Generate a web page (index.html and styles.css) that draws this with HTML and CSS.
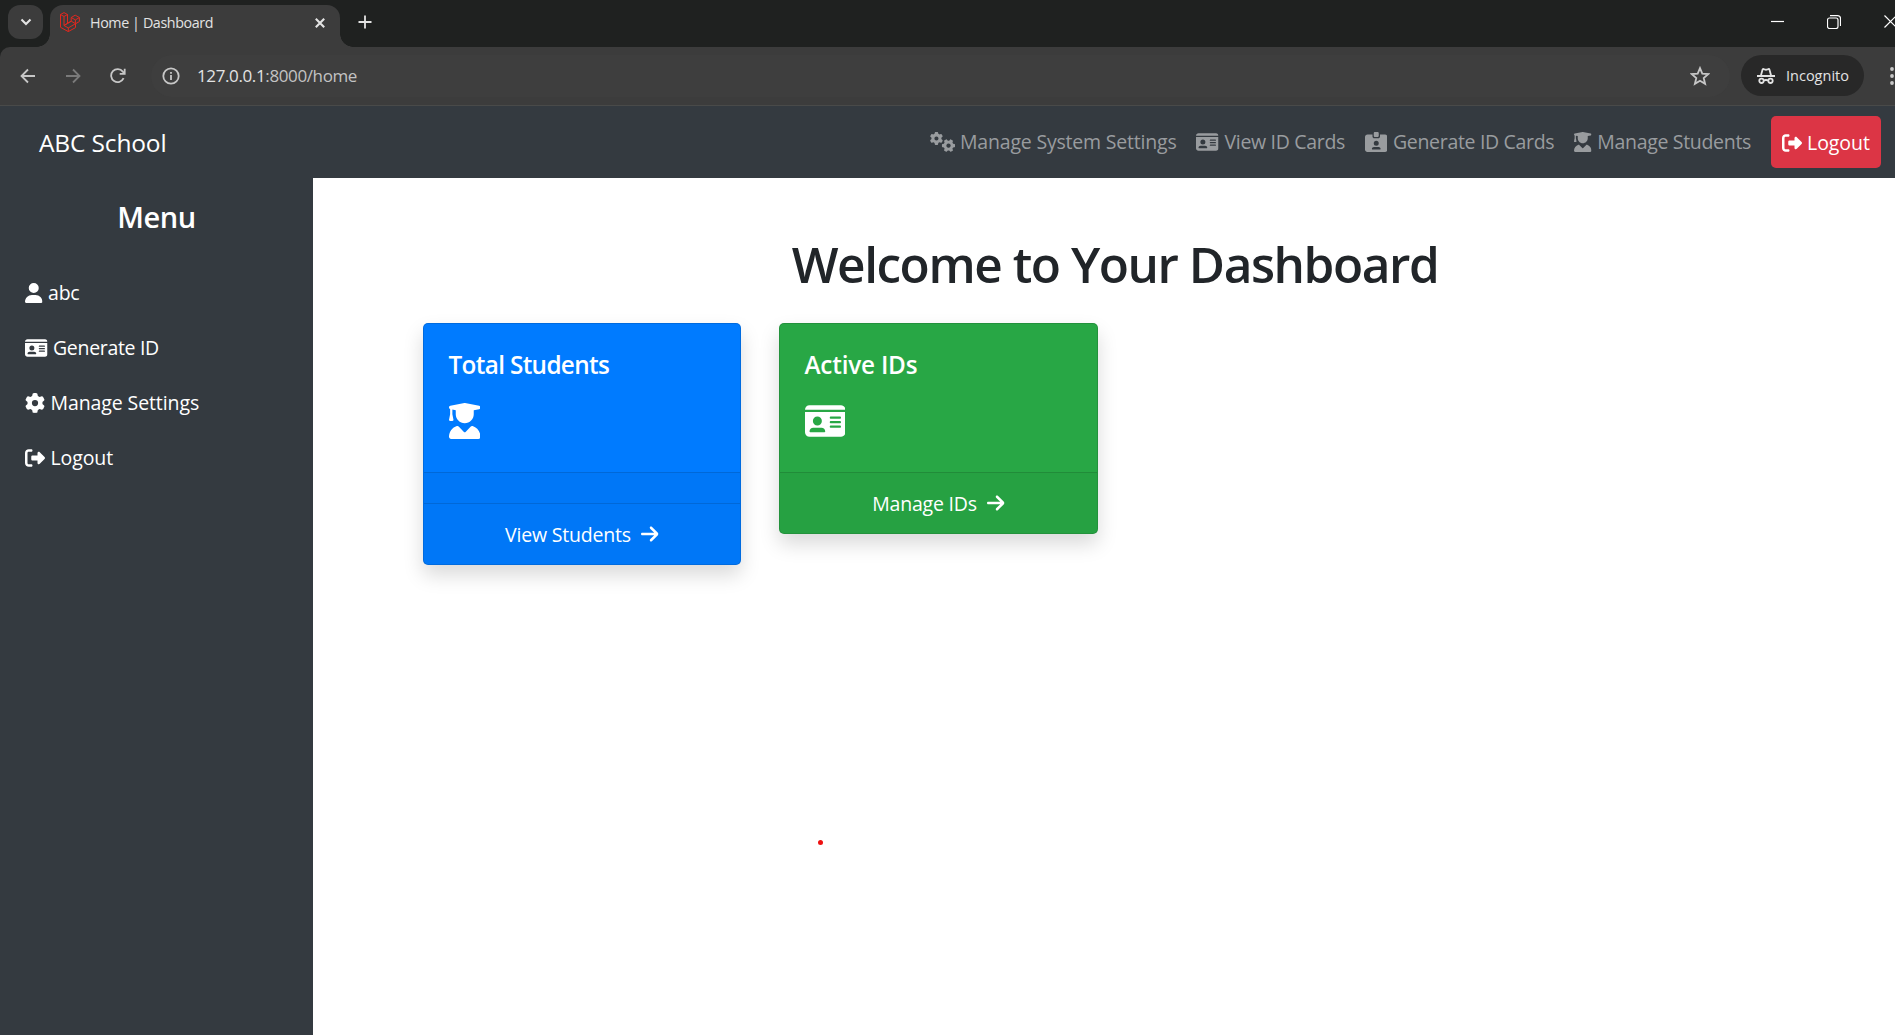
FILE: index.html
```html
<!DOCTYPE html>
<html lang="en">
<head>
<meta charset="utf-8">
<title>Home | Dashboard</title>
<link rel="stylesheet" href="styles.css">
</head>
<body>
<svg class="defs" aria-hidden="true">
  <symbol id="user" viewBox="0 0 448 512"><path d="M224 256A128 128 0 1 0 224 0a128 128 0 1 0 0 256zm-45.700 48C79.800 304 0 383.800 0 482.300C0 498.700 13.300 512 29.700 512l388.600 0c16.400 0 29.700-13.300 29.700-29.700C448 383.800 368.200 304 269.700 304l-91.400 0z"/></symbol>
  <symbol id="id-card" viewBox="0 0 576 512"><path d="M0 96l576 0c0-35.300-28.700-64-64-64L64 32C28.700 32 0 60.700 0 96zm0 32L0 416c0 35.300 28.700 64 64 64l448 0c35.300 0 64-28.700 64-64l0-288L0 128zM64 405.300c0-29.500 23.900-53.300 53.300-53.300l117.300 0c29.500 0 53.300 23.900 53.300 53.300c0 5.900-4.800 10.700-10.700 10.700L74.700 416c-5.900 0-10.700-4.800-10.700-10.700zM176 192a64 64 0 1 1 0 128 64 64 0 1 1 0-128zm176 16c0-8.800 7.200-16 16-16l128 0c8.800 0 16 7.200 16 16s-7.200 16-16 16l-128 0c-8.800 0-16-7.200-16-16zm0 64c0-8.800 7.200-16 16-16l128 0c8.800 0 16 7.200 16 16s-7.200 16-16 16l-128 0c-8.800 0-16-7.200-16-16zm0 64c0-8.800 7.200-16 16-16l128 0c8.800 0 16 7.200 16 16s-7.200 16-16 16l-128 0c-8.800 0-16-7.200-16-16z"/></symbol>
  <symbol id="gear" viewBox="0 0 512 512"><path id="gear-path" d="M495.900 166.600c3.200 8.700 .5 18.400-6.400 24.600l-43.300 39.400c1.100 8.300 1.700 16.800 1.700 25.400s-.6 17.100-1.700 25.400l43.300 39.400c6.900 6.200 9.600 15.900 6.400 24.600c-4.400 11.900-9.700 23.300-15.800 34.300l-4.700 8.100c-6.600 11-14 21.400-22.100 31.200c-5.900 7.200-15.700 9.600-24.500 6.800l-55.700-17.700c-13.400 10.300-28.200 18.900-44 25.400l-12.500 57.100c-2 9.100-9 16.300-18.200 17.800c-13.800 2.300-28 3.500-42.500 3.500s-28.700-1.200-42.500-3.500c-9.200-1.500-16.200-8.700-18.200-17.800l-12.500-57.100c-15.800-6.500-30.600-15.100-44-25.400L83.100 425.900c-8.800 2.800-18.600 .3-24.500-6.800c-8.100-9.800-15.500-20.200-22.100-31.200l-4.700-8.100c-6.100-11-11.400-22.400-15.800-34.300c-3.200-8.700-.5-18.400 6.400-24.600l43.300-39.400C64.600 273.100 64 264.600 64 256s.6-17.100 1.700-25.400L22.400 191.200c-6.900-6.200-9.600-15.900-6.400-24.600c4.400-11.900 9.700-23.300 15.800-34.300l4.700-8.100c6.600-11 14-21.400 22.100-31.200c5.900-7.200 15.700-9.600 24.500-6.800l55.700 17.700c13.400-10.300 28.200-18.900 44-25.400l12.500-57.100c2-9.100 9-16.300 18.200-17.800C227.300 1.200 241.500 0 256 0s28.700 1.200 42.500 3.500c9.200 1.500 16.200 8.700 18.200 17.800l12.500 57.100c15.800 6.500 30.600 15.100 44 25.400l55.700-17.700c8.800-2.800 18.600-.3 24.500 6.800c8.100 9.800 15.500 20.200 22.100 31.200l4.700 8.100c6.100 11 11.400 22.400 15.800 34.300zM256 336a80 80 0 1 0 0-160 80 80 0 1 0 0 160z"/></symbol>
  <symbol id="gears" viewBox="0 0 640 512"><use href="#gear-path" transform="translate(-4 -4) scale(.66)"/><use href="#gear-path" transform="translate(474 348) rotate(30) scale(.66) translate(-256 -256)"/></symbol>
  <symbol id="sign-out" viewBox="0 0 512 512"><path d="M377.900 105.900L500.700 228.700c7.200 7.200 11.300 17.100 11.300 27.300s-4.100 20.100-11.300 27.300L377.900 406.100c-6.400 6.400-15 9.900-24 9.900c-18.700 0-33.900-15.200-33.900-33.900l0-62.100-128 0c-17.700 0-32-14.300-32-32l0-64c0-17.700 14.300-32 32-32l128 0 0-62.100c0-18.700 15.200-33.900 33.900-33.900c9 0 17.600 3.600 24 9.900zM160 96L96 96c-17.700 0-32 14.300-32 32l0 256c0 17.700 14.300 32 32 32l64 0c17.700 0 32 14.300 32 32s-14.300 32-32 32l-64 0c-53 0-96-43-96-96L0 128C0 75 43 32 96 32l64 0c17.700 0 32 14.300 32 32s-14.300 32-32 32z"/></symbol>
  <symbol id="graduate" viewBox="0 0 448 512"><path d="M219.300 .5c3.100-.6 6.300-.6 9.400 0l200 40C439.900 42.700 448 52.600 448 64s-8.100 21.300-19.300 23.500L352 102.900l0 57.100c0 70.700-57.300 128-128 128s-128-57.300-128-128l0-57.100L48 93.300l0 65.100 15.700 78.400c.9 4.700-.3 9.600-3.300 13.300s-7.600 5.900-12.400 5.900l-32 0c-4.800 0-9.300-2.100-12.400-5.900s-4.300-8.600-3.300-13.300L16 158.400l0-71.800C6.500 83.300 0 74.300 0 64C0 52.600 8.100 42.700 19.300 40.500l200-40zM111.900 327.700c10.500-3.400 21.800 .4 29.400 8.500l71 75.500c6.300 6.700 17 6.700 23.300 0l71-75.500c7.600-8.100 18.900-11.900 29.400-8.500C401 348.600 448 409.400 448 481.300c0 17-13.800 30.700-30.700 30.700L30.700 512C13.800 512 0 498.200 0 481.300c0-71.900 47-132.700 111.900-153.600z"/></symbol>
  <symbol id="id-clip" viewBox="0 0 576 512"><path d="M256 0l64 0c17.700 0 32 14.300 32 32l0 64c0 17.700-14.300 32-32 32l-64 0c-17.700 0-32-14.300-32-32l0-64c0-17.700 14.300-32 32-32zM64 64l128 0 0 48c0 26.500 21.500 48 48 48l96 0c26.500 0 48-21.500 48-48l0-48 128 0c35.300 0 64 28.700 64 64l0 320c0 35.300-28.700 64-64 64L64 512c-35.300 0-64-28.700-64-64L0 128C0 92.700 28.700 64 64 64zM176 437.300c0 5.900 4.800 10.700 10.700 10.700l202.700 0c5.900 0 10.700-4.800 10.700-10.700c0-29.500-23.900-53.300-53.300-53.300l-117.300 0c-29.500 0-53.300 23.900-53.300 53.300zM288 352a64 64 0 1 0 0-128 64 64 0 1 0 0 128z"/></symbol>
  <symbol id="arrow" viewBox="0 0 448 512"><path d="M438.600 278.600c12.500-12.500 12.500-32.800 0-45.300l-160-160c-12.500-12.500-32.800-12.500-45.300 0s-12.500 32.800 0 45.300L338.800 224 32 224c-17.700 0-32 14.300-32 32s14.300 32 32 32l306.700 0L233.400 393.400c-12.500 12.500-12.500 32.800 0 45.300s32.800 12.500 45.300 0l160-160z"/></symbol>
</svg>

<header class="browser">
  <div class="tabstrip">
    <div class="tab-search"><svg width="12" height="8" viewBox="0 0 12 8"><path d="M1.500 1.500 6 6l4.500-4.500" class="line bold"/></svg></div>
    <div class="tab">
      <svg class="favicon" width="20" height="20" viewBox="0 0 20 20"><path d="M.5 2.500 4 .6l3.500 1.900v8.900l3.700-2.200V5.500l4-2.300 4.200 2.300v4l-3.900 2.300v3.800l-7.200 4-7.800-4.300zM.5 2.500 4 4.500l3.500-2M4 4.500v9l4.300 2.400v3.700M4 13.500l3.500-2.100M8.300 15.900l7.200-4.200M4 13.500l7.200-4.300 4.300 2.500M11.200 5.500l4.200 2.400 4-2.400M15.400 7.900v3.800"/></svg>
      <span class="tab-title">Home | Dashboard</span>
      <svg class="tab-close" width="10" height="10" viewBox="0 0 10 10"><path d="M.8.8l8.400 8.400M9.200.8.800 9.200" class="line bold"/></svg>
    </div>
    <svg class="new-tab" width="14" height="14" viewBox="0 0 14 14"><path d="M7 .5v13M.5 7h13" class="line"/></svg>
    <div class="window-buttons">
      <svg width="13" height="13" viewBox="0 0 13 13"><path d="M0 6.500h13" class="thin"/></svg>
      <svg width="14" height="14" viewBox="0 0 14 14"><rect x=".5" y="3" width="10.500" height="10.500" rx="2" class="thin"/><path d="M3 .6h7.500a3 3 0 0 1 3 3V11" class="thin"/></svg>
      <svg width="13" height="13" viewBox="0 0 13 13"><path d="M.5.5l12 12M12.500.5l-12 12" class="thin"/></svg>
    </div>
  </div>
  <div class="toolbar">
    <svg width="16" height="16" viewBox="0 0 16 16"><path d="M15 8H2M8 1.500 1.500 8 8 14.500" class="line"/></svg>
    <svg class="disabled" width="16" height="16" viewBox="0 0 16 16"><path d="M1 8h13M8 1.500 14.500 8 8 14.500" class="line"/></svg>
    <svg width="16" height="16" viewBox="0 0 16 16"><path d="M13.600 10.200A6.500 6.500 0 1 1 12.800 3.600L14.500 5.400M14.700.8v5H9.700" class="line"/></svg>
    <div class="omnibox">
      <svg width="18" height="18" viewBox="0 0 18 18"><circle cx="9" cy="9" r="7.700" class="line"/><path d="M9 8v5M9 4.900v1.900" class="line"/></svg>
      <span class="url">127.0.0.1<span>:8000/home</span></span>
      <svg class="star" width="20" height="20" viewBox="0 0 20 20"><path d="M10 2.100l2.300 5.500 5.900.5-4.500 3.900 1.400 5.800L10 14.700l-5.100 3.100L6.300 12 1.800 8.100l5.900-.5z" class="line"/></svg>
    </div>
    <div class="incognito">
      <svg width="18" height="18" viewBox="0 0 18 18"><path d="M0 9h18M3.800 9l1.700-6.300q.3-.9 1.200-.6L9 2.800l2.300-.7q.9-.3 1.200.6L14.200 9" class="line"/><circle cx="4.500" cy="13.800" r="2.200" class="line"/><circle cx="13.500" cy="13.800" r="2.200" class="line"/><path d="M6.700 13.500q2.300-1 4.600 0" class="line"/></svg>
      <span>Incognito</span>
    </div>
    <svg class="kebab" width="4" height="18" viewBox="0 0 4 18"><circle cx="2" cy="2" r="1.900"/><circle cx="2" cy="9" r="1.900"/><circle cx="2" cy="16" r="1.900"/></svg>
  </div>
</header>

<nav class="navbar">
  <a class="brand">ABC School</a>
  <div class="nav-links">
    <a class="nav-link"><svg class="w25"><use href="#gears"/></svg><span>Manage System Settings</span></a>
    <a class="nav-link snug"><svg class="w22"><use href="#id-card"/></svg><span>View ID Cards</span></a>
    <a class="nav-link snug"><svg class="w22"><use href="#id-clip"/></svg><span>Generate ID Cards</span></a>
    <a class="nav-link snug"><svg class="w17"><use href="#graduate"/></svg><span>Manage Students</span></a>
  </div>
  <a class="logout"><svg class="w20"><use href="#sign-out"/></svg><span>Logout</span></a>
</nav>

<div class="layout">
  <aside class="sidebar">
    <h2>Menu</h2>
    <a><svg class="w17"><use href="#user"/></svg><span>abc</span></a>
    <a class="snug"><svg class="w22"><use href="#id-card"/></svg><span>Generate ID</span></a>
    <a class="wide"><svg class="w20"><use href="#gear"/></svg><span>Manage Settings</span></a>
    <a class="wide"><svg class="w20"><use href="#sign-out"/></svg><span>Logout</span></a>
  </aside>
  <main class="content">
    <h1>Welcome to Your Dashboard</h1>
    <div class="cards">
      <section class="card blue">
        <div class="card-body"><h5 class="snug">Total Students</h5><svg class="student-icon"><use href="#graduate"/></svg></div>
        <div class="card-footer"></div>
        <div class="card-footer"><span>View Students</span><svg class="w17"><use href="#arrow"/></svg></div>
      </section>
      <section class="card green">
        <div class="card-body"><h5>Active IDs</h5><svg class="id-icon"><use href="#id-card"/></svg></div>
        <div class="card-footer"><span>Manage IDs</span><svg class="w17"><use href="#arrow"/></svg></div>
      </section>
    </div>
    <i class="pointer-dot"></i>
  </main>
</div>
</body>
</html>
```
FILE: styles.css
```css
* { box-sizing: border-box; }
body {
  margin: 0;
  width: 1895px;
  height: 1035px;
  overflow: hidden;
  display: flex;
  flex-direction: column;
  background: #fff;
  color: #212529;
  font: 19.5px/30px "Open Sans", "Noto Sans", sans-serif;
  letter-spacing: -.2px;
}
h1, h2, h5 { margin: 0; font-weight: 600; }
svg { display: block; flex: none; fill: currentColor; }
span { white-space: nowrap; }
.defs { position: absolute; width: 0; height: 0; }
.line { fill: none; stroke: currentColor; stroke-width: 1.8; }
.bold { stroke-width: 2.1; }
.thin { fill: none; stroke: currentColor; stroke-width: 1.2; }
.w17 { width: 17.5px; height: 20px; }
.w20 { width: 20px; height: 20px; }
.w22 { width: 22.5px; height: 20px; }
.w25 { width: 25px; height: 20px; }
.snug { letter-spacing: -.32px; }
.wide { letter-spacing: -.1px; }

/* Browser frame */
.browser { flex: none; height: 106px; background: #1f2120; color: #e3e3e3; }
.tabstrip { display: flex; height: 47px; padding: 5px 0 0 8px; }
.tab-search {
  width: 35px; height: 34px; border-radius: 12px; background: #3c3c3c;
  display: grid; place-items: center;
}
.tab {
  position: relative; width: 290px; height: 42px; margin-left: 7px; padding: 0 15px 0 10px;
  border-radius: 13px 13px 0 0; background: #3c3c3c;
  display: flex; align-items: center;
}
.tab::before, .tab::after {
  content: ""; position: absolute; bottom: 0; width: 13px; height: 13px;
}
.tab::before { left: -13px; background: radial-gradient(circle at 0 0, transparent 12.5px, #3c3c3c 13px); }
.tab::after { right: -13px; background: radial-gradient(circle at 100% 0, transparent 12.5px, #3c3c3c 13px); }
.favicon { margin-bottom: 8px; fill: none; stroke: #e0281f; stroke-width: 1; }
.tab-title { margin: 0 auto 7px 10px; font-size: 14.3px; letter-spacing: -.4px; }
.tab-close { margin-bottom: 7px; }
.new-tab { margin: 10px 0 0 18px; }
.window-buttons { display: flex; gap: 43px; margin: 10px -2px 0 auto; color: #fff; }
.toolbar {
  display: flex; align-items: center; height: 59px; padding: 0 0 1px 20px;
  background: #3c3c3c; border-bottom: 1px solid #494a49; border-radius: 10px 0 0 0;
  color: #c7c7c7;
}
.toolbar > svg { margin-right: 29px; }
.disabled { opacity: .45; }
.omnibox {
  display: flex; align-items: center; width: 1579px; height: 42px; margin-left: -4px;
  padding: 0 20px 0 11px; border-radius: 21px; background: #3e3e3e;
}
.url { margin: 1px auto 0 17px; font-size: 17px; letter-spacing: -.38px; color: #e3e3e3; }
.url span { color: #c3c3c3; }
.incognito {
  display: flex; align-items: center; width: 123px; height: 41px; margin-left: 11px;
  padding-left: 16px; gap: 11px; border-radius: 21px; background: #282828; color: #e3e3e3;
  font-size: 14.5px; letter-spacing: 0;
}
.toolbar > .kebab { margin: 0 0 0 26px; }

/* Site navigation */
.navbar {
  flex: none; display: flex; align-items: center; height: 72px; padding: 0 14px 0 39px;
  background: #343a40; color: #fff;
}
.brand { font-size: 24.5px; letter-spacing: -.15px; padding-top: 1px; }
.nav-links { display: flex; gap: 20px; margin-left: auto; }
.nav-link { display: flex; align-items: center; gap: 5.500px; color: #999c9f; }
.logout {
  display: flex; align-items: center; gap: 5.500px; width: 110px; height: 52px; margin-left: 20px;
  padding: 1px 0 0 10.500px; border-radius: 5px; background: #dc3545; letter-spacing: -.05px;
}

/* Page body */
.layout { flex: 1; display: flex; }
.sidebar { width: 313px; background: #343a40; color: #fff; }
.sidebar h2 { padding: 21px 0 30px; font-size: 29px; line-height: 36px; letter-spacing: -.4px; text-align: center; }
.sidebar a { display: flex; align-items: center; gap: 5.500px; height: 55px; padding-left: 25px; }
.content { position: relative; flex: 1; padding: 56px 0 0; }
h1 { margin-left: 22px; font-size: 49.5px; line-height: 60px; letter-spacing: -1.45px; text-align: center; }
.cards { display: flex; align-items: flex-start; gap: 38px; margin: 29px 0 0 110px; }
.card {
  width: 318px; border: 1px solid rgba(0,0,0,.125); border-radius: 5px; color: #fff;
  box-shadow: 0 10px 20px rgba(0,0,0,.15);
}
.blue { background: #007bff; }
.green { width: 319px; background: #28a745; }
.card-body { height: 148px; padding: 26px 24.500px 0; }
h5 { font-size: 24.300px; line-height: 30px; letter-spacing: -.2px; }
h5.snug { letter-spacing: -.65px; }
.card-body svg { margin-top: 23px; height: 36px; }
.student-icon { width: 31.500px; }
.id-icon { width: 40.500px; }
.card-footer {
  display: flex; justify-content: center; gap: 10.500px; align-items: center;
  padding: 15px 25px; background: rgba(0,0,0,.03); border-top: 1px solid rgba(0,0,0,.125);
}
.card-footer span { padding-top: 1px; margin-bottom: -1px; }
.pointer-dot {
  position: absolute; left: 505px; top: 662px; width: 5px; height: 5px;
  border-radius: 50%; background: #ee1010;
}
```
